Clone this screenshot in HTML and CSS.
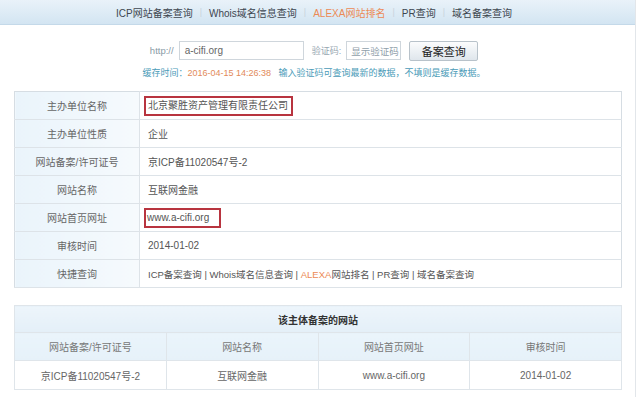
FILE: index.html
```html
<!DOCTYPE html>
<html>
<head>
    <meta charset="utf-8">
    <title>ICP备案查询</title>
    <link rel="stylesheet" href="styles.css">
</head>
<body>
    <div class="page">

        <div class="nav">
            <a href="#">ICP网站备案查询</a>
            <span class="sep">|</span>
            <a href="#">Whois域名信息查询</a>
            <span class="sep">|</span>
            <a href="#" class="hot">ALEXA网站排名</a>
            <span class="sep">|</span>
            <a href="#">PR查询</a>
            <span class="sep">|</span>
            <a href="#">域名备案查询</a>
        </div>

        <div class="search">
            <div class="search-row">
                <span class="label">http://</span>
                <div class="input domain">a-cifi.org</div>
                <span class="label code-label">验证码:</span>
                <div class="input captcha">显示验证码</div>
                <button class="query-btn">备案查询</button>
            </div>
            <div class="cache-note">
                缓存时间：<span class="cache-time">2016-04-15 14:26:38</span>
                <span class="hint">输入验证码可查询最新的数据，不填则是缓存数据。</span>
            </div>
        </div>

        <table class="info">
            <tr>
                <th>主办单位名称</th>
                <td><span class="mark mark-name">北京聚胜资产管理有限责任公司</span></td>
            </tr>
            <tr>
                <th>主办单位性质</th>
                <td>企业</td>
            </tr>
            <tr>
                <th>网站备案/许可证号</th>
                <td>京ICP备11020547号-2</td>
            </tr>
            <tr>
                <th>网站名称</th>
                <td>互联网金融</td>
            </tr>
            <tr>
                <th>网站首页网址</th>
                <td><span class="mark mark-url">www.a-cifi.org</span></td>
            </tr>
            <tr>
                <th>审核时间</th>
                <td>2014-01-02</td>
            </tr>
            <tr>
                <th>快捷查询</th>
                <td class="links">ICP备案查询 | Whois域名信息查询 | <span class="hot">ALEXA</span>网站排名 | PR查询 | 域名备案查询</td>
            </tr>
        </table>

        <table class="sites">
            <tr>
                <th colspan="4" class="title">该主体备案的网站</th>
            </tr>
            <tr class="head">
                <th>网站备案/许可证号</th>
                <th>网站名称</th>
                <th>网站首页网址</th>
                <th>审核时间</th>
            </tr>
            <tr>
                <td>京ICP备11020547号-2</td>
                <td>互联网金融</td>
                <td>www.a-cifi.org</td>
                <td>2014-01-02</td>
            </tr>
        </table>

    </div>
</body>
</html>
```

FILE: styles.css
```css
* {
    box-sizing: border-box;
}

body {
    margin: 0;
    background: #fff;
    font-family: "Liberation Sans", "Noto Sans CJK SC", sans-serif;
    font-size: 10px;
    color: #555;
    white-space: nowrap;
}

.page {
    width: 636px;
    height: 397px;
    border-right: 1px solid #e2e6ea;
}

/* top navigation */
.nav {
    height: 25px;
    display: flex;
    align-items: center;
    justify-content: center;
    gap: 7px;
    padding-right: 7px;
    background: linear-gradient(to bottom, #e9f2f9, #d3e5f2);
    border-bottom: 1px solid #c4d9e9;
    font-size: 10px;
}

.nav a {
    color: #3d4650;
    text-decoration: none;
}

.nav .sep {
    color: #c9d3dc;
    font-size: 9px;
}

.hot,
.nav a.hot {
    color: #ec8a55;
}

/* search form */
.search {
    padding-top: 15px;
    padding-right: 7px;
}

.search-row {
    display: flex;
    align-items: center;
    justify-content: center;
    height: 21px;
}

.label {
    color: #8a9aa6;
    font-size: 9.5px;
}

.input {
    height: 19px;
    border: 1px solid #cfd6dc;
    color: #666;
    display: flex;
    align-items: center;
    padding-left: 5px;
    font-size: 10px;
}

.domain {
    width: 125px;
    margin-left: 5px;
}

.code-label {
    margin-left: 8px;
    font-size: 9px;
    color: #96a6b0;
}

.captcha {
    width: 55px;
    margin-left: 5px;
    color: #8fa0aa;
    padding-left: 4px;
    font-size: 9.5px;
}

.query-btn {
    width: 69px;
    height: 20px;
    margin-left: 8px;
    border: 1px solid #b8c2ca;
    border-radius: 2px;
    background: linear-gradient(to bottom, #fbfcfd, #dfe6ec);
    font-family: inherit;
    font-size: 11px;
    color: #222;
    padding: 0;
}

.cache-note {
    margin-top: 5px;
    text-align: center;
    color: #4a9bb8;
    font-size: 9px;
}

.cache-time {
    color: #e28a5a;
}

.hint {
    margin-left: 5px;
}

/* info table */
table {
    border-collapse: collapse;
    margin: 0 14px;
    width: 608px;
}

.info {
    margin-top: 12px;
    border: 1px solid #d6dde3;
}

.info th,
.info td {
    height: 28px;
    padding-top: 0;
    padding-bottom: 0;
}

.info th {
    width: 125px;
    font-weight: normal;
    color: #666;
    background: linear-gradient(to right, #eaf4fb, #f6fafd);
    border-right: 1px solid #dde3e8;
    border-bottom: 1px solid #dde3e8;
}

.info td {
    padding-left: 8px;
    color: #555;
    border-bottom: 1px solid #dde3e8;
}

.mark {
    display: inline-block;
    border: 2px solid #b8343f;
    line-height: 16px;
    margin-left: -4px;
}

.mark-name {
    padding: 0 3px 0 2px;
}

.mark-url {
    padding: 0 10px 0 1px;
}

.links {
    color: #555;
    font-size: 9.5px;
}

/* sites table */
.sites {
    margin-top: 17px;
    border: 1px solid #d9e0e6;
    table-layout: fixed;
}

.sites th,
.sites td {
    height: 28px;
    padding: 0;
    text-align: center;
    font-weight: normal;
    border: 1px solid #dfe5ea;
    color: #666;
}

.sites .title {
    height: 27px;
    background: linear-gradient(to bottom, #edf5fb, #e4eff8);
    color: #333;
    font-weight: bold;
    font-size: 10px;
}

.sites .head th {
    background: linear-gradient(to bottom, #eaf4fb, #e6f1f9);
    color: #777;
}

.sites td {
    height: 29px;
}
```
